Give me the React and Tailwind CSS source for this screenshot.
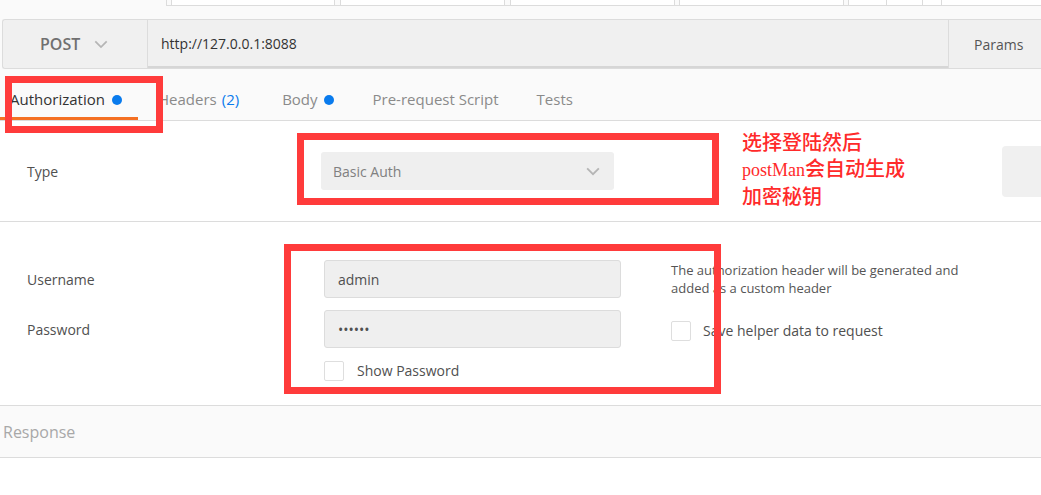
import React from "react";

const stripTabs = [
  { w: "w-[167px]", cls: "border-r border-[#dcdcdc] bg-[#fafafa]" },
  { w: "w-[4px]", cls: "border-b border-[#dcdcdc]" },
  { w: "w-[164px]", cls: "border-x border-b border-[#dcdcdc] bg-white" },
  { w: "w-[5px]", cls: "border-b border-[#dcdcdc]" },
  { w: "w-[165px]", cls: "border-x border-b border-[#dcdcdc] bg-white" },
  { w: "w-[5px]", cls: "border-b border-[#dcdcdc]" },
  { w: "w-[165px]", cls: "border-x border-b border-[#dcdcdc] bg-white" },
  { w: "w-[4px]", cls: "border-b border-[#dcdcdc]" },
  { w: "w-[165px]", cls: "border-x border-b border-[#dcdcdc] bg-white" },
  { w: "w-[4px]", cls: "border-b border-[#dcdcdc]" },
  { w: "w-[39px]", cls: "border-x border-b border-[#dcdcdc] bg-white" },
  { w: "w-[36px]", cls: "border-r border-b border-[#dcdcdc] bg-white" },
  { w: "w-[19px]", cls: "border-r border-b border-[#dcdcdc] bg-white" },
  { w: "flex-1", cls: "border-b border-[#dcdcdc] bg-white" },
];

const Chevron = ({ className }) => (
  <svg viewBox="0 0 16 10" className={className} fill="none">
    <polyline points="1.5,1.5 8,8 14.5,1.5" stroke="currentColor" strokeWidth="2" />
  </svg>
);

const Dot = () => <span className="inline-block w-[10px] h-[10px] rounded-full bg-[#097bed]" />;

const Checkbox = () => (
  <span className="inline-block w-[20px] h-[20px] rounded-[2px] border border-[#dedede] bg-white" />
);

export default function App() {
  return (
    <div className="relative w-[1041px] h-[495px] overflow-hidden bg-white font-['Open_Sans',sans-serif] text-[#505050]">
      {/* request header area */}
      <div className="bg-[#fafafa]">
        <div className="flex h-[6px]">
          {stripTabs.map((t, i) => (
            <div key={i} className={`${t.w} ${t.cls}`} />
          ))}
        </div>

        <div className="mt-[13px] ml-[2px] flex h-[50px] rounded-l-[3px] border-y border-l border-[#dcdcdc] bg-[#f0f0f0]">
          <div className="flex w-[145px] items-center border-r border-[#dcdcdc] pl-[37px]">
            <span className="text-[16px] font-semibold text-[#707070]">POST</span>
            <Chevron className="ml-[14px] w-[14px] h-[9px] text-[#b5b5b5]" />
          </div>
          <div className="flex flex-1 items-center border-b-2 border-[#d6d6d6] pl-[13px] text-[14px] text-[#333]">
            http://127.0.0.1:8088
          </div>
          <div className="flex w-[93px] items-center border-l border-[#dcdcdc] pl-[25px] text-[14px] text-[#555]">
            Params
          </div>
        </div>

        <div className="flex h-[52px] border-b border-[#dcdcdc] text-[15px] text-[#8a8a8a]">
          <div className="relative flex w-[138px] items-center gap-[7px] pl-[10px] pt-[10px] text-[#333]">
            Authorization <Dot />
            <span className="absolute bottom-0 left-0 h-[3px] w-[138px] bg-[#f47023]" />
          </div>
          <div className="ml-[20px] flex items-center pt-[10px]">
            Headers <span className="ml-[5px] text-[#097bed]">(2)</span>
          </div>
          <div className="ml-[43px] flex items-center gap-[6px] pt-[10px]">
            Body <Dot />
          </div>
          <div className="ml-[39px] flex items-center pt-[10px]">Pre-request Script</div>
          <div className="ml-[38px] flex items-center pt-[10px]">Tests</div>
        </div>
      </div>

      {/* type row */}
      <div className="flex h-[101px] items-center border-b border-[#dcdcdc] text-[14px]">
        <div className="w-[321px] pl-[27px]">Type</div>
        <div className="flex h-[38px] w-[293px] items-center justify-between rounded-[3px] bg-[#efefef] pl-[12px] pr-[13px] text-[#808080]">
          Basic Auth
          <Chevron className="w-[16px] h-[9px] text-[#b5b5b5]" />
        </div>
        <div className="ml-auto h-[51px] w-[39px] self-center rounded-l-[4px] bg-[#f0f0f0]" />
      </div>

      {/* credentials */}
      <div className="flex h-[183px] text-[14px]">
        <div className="w-[324px] pl-[27px] pt-[48px]">
          <div className="leading-[20px]">Username</div>
          <div className="mt-[30px] leading-[20px]">Password</div>
        </div>
        <div className="w-[297px] pt-[38px]">
          <div className="flex h-[38px] items-center rounded-[3px] border border-[#dcdcdc] bg-[#efefef] pl-[13px] text-[#505050]">
            admin
          </div>
          <div className="mt-[12px] flex h-[38px] items-center rounded-[3px] border border-[#dcdcdc] bg-[#efefef] pl-[13px] text-[#505050]">
            ••••••
          </div>
          <div className="mt-[12px] flex items-center gap-[13px]">
            <Checkbox />
            Show Password
          </div>
        </div>
        <div className="ml-[50px] pt-[39px]">
          <div className="text-[13px] leading-[18px] text-[#555]">
            The authorization header will be generated and
            <br />
            added as a custom header
          </div>
          <div className="mt-[23px] flex items-center gap-[12px]">
            <Checkbox />
            Save helper data to request
          </div>
        </div>
      </div>

      {/* response */}
      <div className="flex h-[53px] items-center border-y border-[#dcdcdc] bg-[#fafafa] pl-[3px] text-[16px] text-[#a8a8a8]">
        Response
      </div>

      {/* annotations */}
      <div className="absolute left-[5px] top-[76px] h-[57px] w-[158px] border-[7px] border-[#ff3b3b]" />
      <div className="absolute left-[297px] top-[133px] h-[72px] w-[422px] border-[7px] border-[#ff3b3b]" />
      <div className="absolute left-[284px] top-[244px] h-[150px] w-[437px] border-[7px] border-[#ff3b3b]" />
      <div className="absolute left-[742px] top-[129px] text-[20px] font-medium leading-[26px] text-[#ff2a2a] font-['Noto_Sans_CJK_SC',sans-serif]">
        <div>选择登陆然后</div>
        <div>
          <span className="font-['Liberation_Serif','Noto_Sans_CJK_SC',serif] text-[18px]">postMan</span>会自动生成
        </div>
        <div>加密秘钥</div>
      </div>
    </div>
  );
}
